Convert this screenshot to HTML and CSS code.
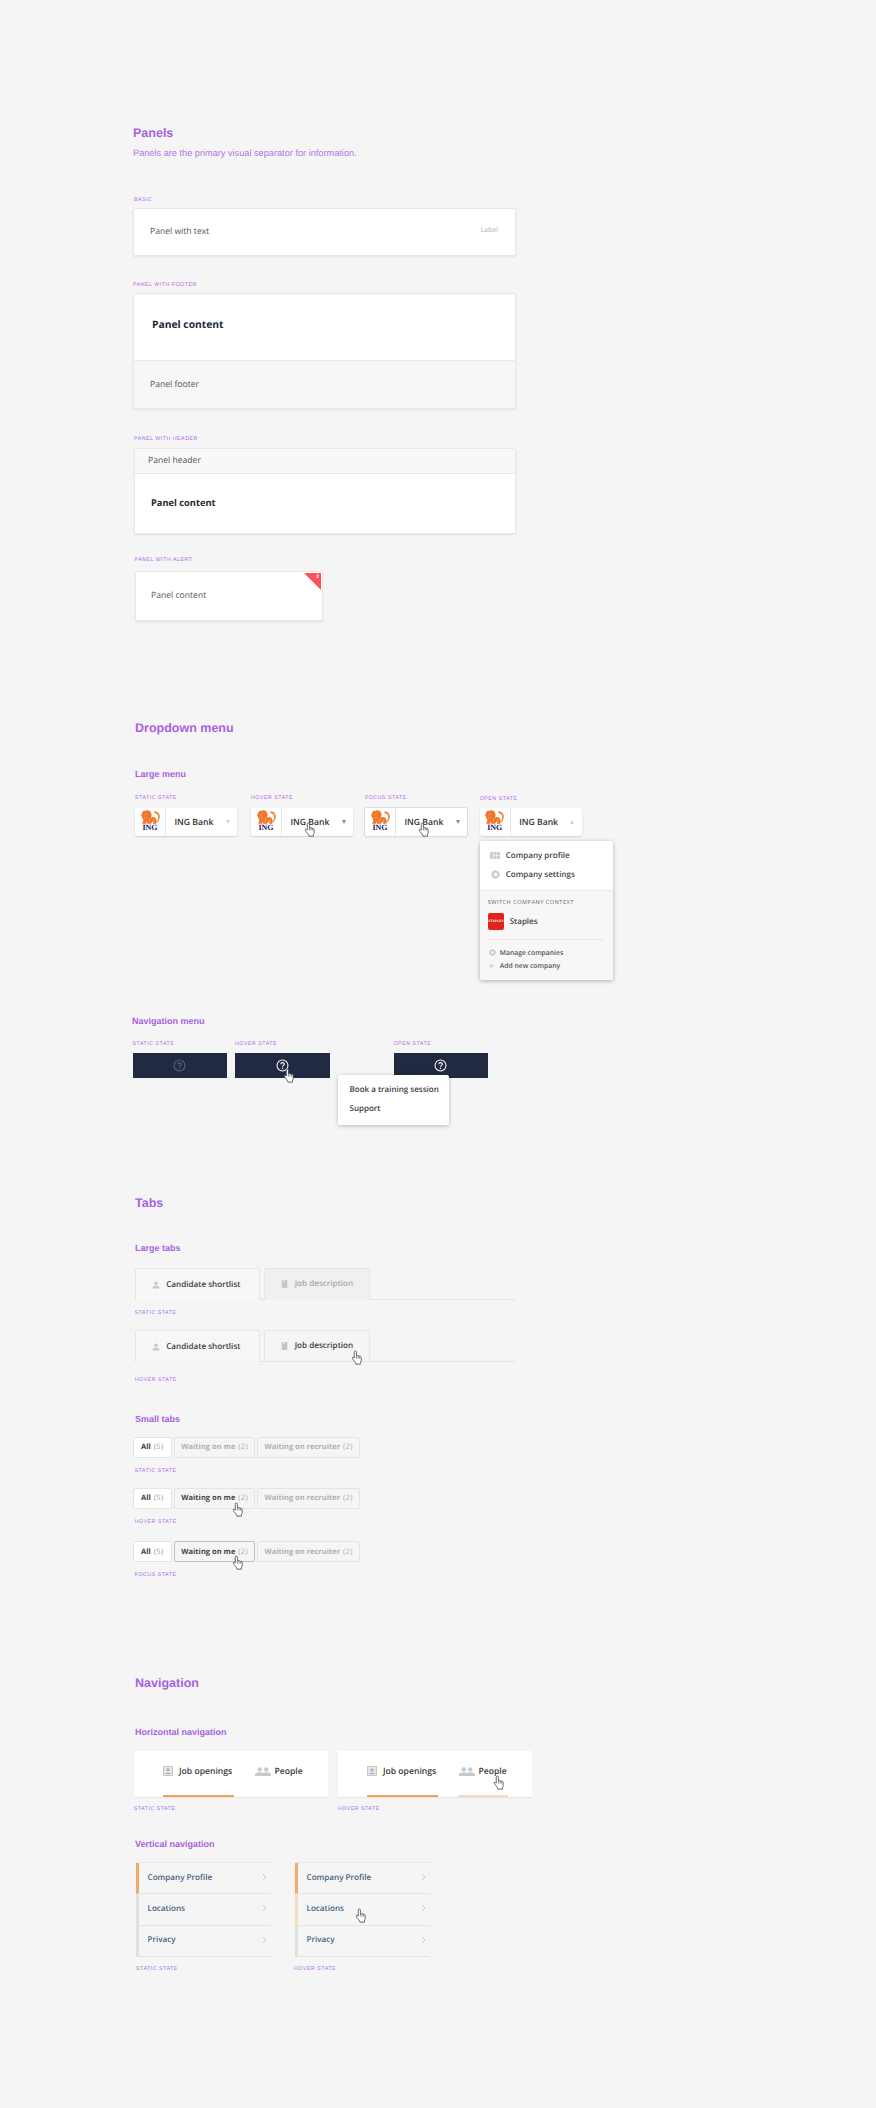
FILE: index.html
```html
<!DOCTYPE html>
<html lang="en">
<head>
    <meta charset="UTF-8">
    <meta name="viewport" content="width=device-width, initial-scale=1.0">
    <title>Panels, menus, tabs and navigation</title>
    <link rel="stylesheet" href="styles.css">
</head>
<body>
    <svg class="sprites" width="0" height="0">
        <symbol id="lion" viewBox="0 0 30 21">
            <path d="M21 2c5.500 0 8.500 4 8 9-.4 4-3 7.500-6.500 9l-1-1.400c2.700-1.500 4.800-4.300 5-7.300.2-3.400-1.800-6-5.500-6.300z" fill="#f58a3c"/>
            <path d="M8 1c3.500-1.300 7 .3 8 3.500 1.200 3 .5 5.500-.5 7 2.500-1.500 5-1.200 6.500 0 1.700 1.400 2 4.500 1.500 9H19l-.5-3.500-3 3.500H9.500l.5-4-2 4H2.500l2-6c-1.500-1-2.500-3-2-4.500-1.500-.5-2-2-1-3 .1-2.500 2-4.500 3-5.500.7-.3 2.200-.5 3.500 0z" fill="#f2762a"/>
            <path d="M6 7.500l3-1M5 11.500c2 .5 3.500 0 4.500-1M14 12l-1 6M20 14l-1 5" stroke="#fbc79c" stroke-width=".8" fill="none"/>
        </symbol>
        <symbol id="hand" viewBox="0 0 14 18">
            <path d="M5 1.200c.8 0 1.300.6 1.300 1.400v4.200c.3-.4 1.700-.4 2 .3.400-.3 1.600-.3 1.900.6.500-.3 1.800-.1 1.800 1.100v3.400c0 1.600-.5 2.400-1 3.400v1.400H5.600v-1.200C4.500 14.600 3.600 13 2.400 11.600 1.600 10.600.9 9.600 1.500 9c.7-.6 1.600 0 2.200.8V2.600C3.700 1.800 4.200 1.200 5 1.200z" fill="#fff" stroke="#3a3a3a" stroke-width=".9" stroke-linejoin="round"/>
            <path d="M6.300 7v3.200M8.300 7.200v3M10.200 8v2.400" stroke="#3a3a3a" stroke-width=".7" fill="none"/>
        </symbol>
        <symbol id="question" viewBox="0 0 14 14">
            <circle cx="7" cy="7" r="5.900" fill="none" stroke="currentColor" stroke-width="1.100"/>
            <path d="M5.200 5.600c0-2.300 3.700-2.300 3.700-.1 0 1.400-1.900 1.400-1.900 2.900" fill="none" stroke="currentColor" stroke-width="1.200"/>
            <circle cx="7" cy="10" r=".8" fill="currentColor"/>
        </symbol>
        <symbol id="person" viewBox="0 0 10 10">
            <circle cx="5" cy="2.800" r="2.100" fill="currentColor"/>
            <path d="M.8 9.500V8c0-1.400 2.400-2.100 4.200-2.100S9.200 6.600 9.200 8v1.500z" fill="currentColor"/>
        </symbol>
        <symbol id="doc" viewBox="0 0 8 10">
            <path d="M.5 0h1.800v2.500l.8-.6.8.6V0H7.500v10H.5z" fill="currentColor"/>
        </symbol>
        <symbol id="inbox" viewBox="0 0 10 10">
            <path d="M.5.500h9v9h-9z" fill="#e6e6e6" stroke="#c6c6c6"/>
            <path d="M5 2v4M3 4h4M2.500 7.500h5" stroke="#a9a9a9" stroke-width="1" fill="none"/>
        </symbol>
        <symbol id="people" viewBox="0 0 16 9">
            <circle cx="4.800" cy="2.400" r="2.200" fill="currentColor"/>
            <circle cx="11.200" cy="2.400" r="2.200" fill="currentColor"/>
            <path d="M0 9V7.500c0-1.500 2.600-2.300 4.800-2.300 1.300 0 2.400.3 3.200.7.800-.4 1.900-.7 3.200-.7 2.200 0 4.800.8 4.800 2.300V9z" fill="currentColor"/>
        </symbol>
        <symbol id="chevron" viewBox="0 0 5 8">
            <path d="M1 1l3 3-3 3" fill="none" stroke="#c9c9c9" stroke-width="1"/>
        </symbol>
        <symbol id="gear" viewBox="0 0 10 10">
            <circle cx="5" cy="5" r="3" fill="none" stroke="#c4c4c4" stroke-width="1.600"/>
            <circle cx="5" cy="5" r="4.300" fill="none" stroke="#c4c4c4" stroke-width="1.200" stroke-dasharray="1.500 1.200"/>
        </symbol>
        <symbol id="grid" viewBox="0 0 10 7">
            <path d="M0 0h3v7H0zM3.500 0h3v3h-3zM7 0h3v3H7zM3.500 3.500h3V7h-3zM7 3.500h3V7H7z" fill="#cfcfcf"/>
        </symbol>
    </svg>

    <main class="page">
        <!-- Panels -->
        <h1 class="title">Panels</h1>
        <p class="intro">Panels are the primary visual separator for information.</p>

        <div class="cap cap-basic">Basic</div>
        <div class="panel panel-basic">
            <span>Panel with text</span>
            <span class="panel-label">Label</span>
        </div>

        <div class="cap cap-footer">Panel with footer</div>
        <div class="panel panel-footer">
            <div class="footer-body"><strong>Panel content</strong></div>
            <div class="footer-foot">Panel footer</div>
        </div>

        <div class="cap cap-header">Panel with header</div>
        <div class="panel panel-header">
            <div class="header-head">Panel header</div>
            <div class="header-body"><strong>Panel content</strong></div>
        </div>

        <div class="cap cap-alert">Panel with alert</div>
        <div class="panel panel-alert">
            <span>Panel content</span>
            <span class="alert-corner"></span>
            <span class="alert-count">2</span>
        </div>

        <!-- Dropdown menu -->
        <h1 class="title title-dropdown">Dropdown menu</h1>
        <h2 class="subtitle sub-large">Large menu</h2>
        <div class="drop-states">
            <div>
                <div class="cap">Static state</div>
                <div class="dropdown">
                    <div class="logo"><svg class="lion"><use href="#lion"/></svg><span>ING</span></div>
                    <span class="drop-name">ING Bank</span>
                    <span class="arrow arrow-light"></span>
                </div>
            </div>
            <div>
                <div class="cap">Hover state</div>
                <div class="dropdown">
                    <div class="logo"><svg class="lion"><use href="#lion"/></svg><span>ING</span></div>
                    <span class="drop-name">ING Bank</span>
                    <span class="arrow"></span>
                    <svg class="hand hand-drop"><use href="#hand"/></svg>
                </div>
            </div>
            <div>
                <div class="cap">Focus state</div>
                <div class="dropdown dropdown-focus">
                    <div class="logo"><svg class="lion"><use href="#lion"/></svg><span>ING</span></div>
                    <span class="drop-name">ING Bank</span>
                    <span class="arrow"></span>
                    <svg class="hand hand-drop"><use href="#hand"/></svg>
                </div>
            </div>
            <div>
                <div class="cap cap-open">Open state</div>
                <div class="dropdown">
                    <div class="logo"><svg class="lion"><use href="#lion"/></svg><span>ING</span></div>
                    <span class="drop-name">ING Bank</span>
                    <span class="arrow arrow-up"></span>
                    <div class="drop-menu">
                        <div class="menu-top">
                            <div class="menu-item"><svg class="icon-grid"><use href="#grid"/></svg>Company profile</div>
                            <div class="menu-item"><svg class="icon-gear"><use href="#gear"/></svg>Company settings</div>
                        </div>
                        <div class="menu-bottom">
                            <div class="menu-cap">Switch company context</div>
                            <div class="menu-company"><span class="staples"><span>STAPLES</span></span>Staples</div>
                            <div class="menu-link menu-link-first"><svg class="icon-small"><use href="#gear"/></svg>Manage companies</div>
                            <div class="menu-link"><span class="plus">+</span>Add new company</div>
                        </div>
                    </div>
                </div>
            </div>
        </div>

        <h2 class="subtitle sub-navmenu">Navigation menu</h2>
        <div class="nav-states">
            <div>
                <div class="cap">Static state</div>
                <div class="nav-bar nav-bar-dim"><svg class="question"><use href="#question"/></svg></div>
            </div>
            <div>
                <div class="cap">Hover state</div>
                <div class="nav-bar">
                    <svg class="question"><use href="#question"/></svg>
                    <svg class="hand hand-nav"><use href="#hand"/></svg>
                </div>
            </div>
            <div>
                <div class="cap">Open state</div>
                <div class="nav-bar">
                    <svg class="question"><use href="#question"/></svg>
                    <div class="nav-pop">
                        <div>Book a training session</div>
                        <div>Support</div>
                    </div>
                </div>
            </div>
        </div>

        <!-- Tabs -->
        <h1 class="title title-tabs">Tabs</h1>
        <h2 class="subtitle sub-largetabs">Large tabs</h2>
        <div class="large-tabs">
            <div class="ltab ltab-active"><svg class="icon-person"><use href="#person"/></svg>Candidate shortlist</div>
            <div class="ltab ltab-off"><svg class="icon-doc"><use href="#doc"/></svg>Job description</div>
        </div>
        <div class="cap cap-tab1">Static state</div>
        <div class="large-tabs large-tabs-2">
            <div class="ltab ltab-active"><svg class="icon-person"><use href="#person"/></svg>Candidate shortlist</div>
            <div class="ltab ltab-hover"><svg class="icon-doc"><use href="#doc"/></svg>Job description<svg class="hand hand-ltab"><use href="#hand"/></svg></div>
        </div>
        <div class="cap cap-tab2">Hover state</div>

        <h2 class="subtitle sub-smalltabs">Small tabs</h2>
        <div class="small-tabs st-1">
            <div class="stab stab-on">All <span>(5)</span></div>
            <div class="stab stab-mid">Waiting on me <span>(2)</span></div>
            <div class="stab stab-wide">Waiting on recruiter <span>(2)</span></div>
        </div>
        <div class="cap cap-st1">Static state</div>
        <div class="small-tabs st-2">
            <div class="stab stab-on">All <span>(5)</span></div>
            <div class="stab stab-mid stab-dark">Waiting on me <span>(2)</span><svg class="hand hand-stab"><use href="#hand"/></svg></div>
            <div class="stab stab-wide">Waiting on recruiter <span>(2)</span></div>
        </div>
        <div class="cap cap-st2">Hover state</div>
        <div class="small-tabs st-3">
            <div class="stab stab-on">All <span>(5)</span></div>
            <div class="stab stab-mid stab-dark stab-focus">Waiting on me <span>(2)</span><svg class="hand hand-stab"><use href="#hand"/></svg></div>
            <div class="stab stab-wide">Waiting on recruiter <span>(2)</span></div>
        </div>
        <div class="cap cap-st3">Focus state</div>

        <!-- Navigation -->
        <h1 class="title title-nav">Navigation</h1>
        <h2 class="subtitle sub-hnav">Horizontal navigation</h2>
        <div class="hnav-row">
            <div>
                <div class="hnav">
                    <div class="hnav-item hnav-jobs hnav-current"><svg class="icon-inbox"><use href="#inbox"/></svg>Job openings</div>
                    <div class="hnav-item hnav-people"><svg class="icon-people"><use href="#people"/></svg>People</div>
                </div>
                <div class="cap cap-hnav">Static state</div>
            </div>
            <div>
                <div class="hnav">
                    <div class="hnav-item hnav-jobs hnav-current"><svg class="icon-inbox"><use href="#inbox"/></svg>Job openings</div>
                    <div class="hnav-item hnav-people hnav-hover"><svg class="icon-people"><use href="#people"/></svg>People<svg class="hand hand-hnav"><use href="#hand"/></svg></div>
                </div>
                <div class="cap cap-hnav">Hover state</div>
            </div>
        </div>

        <h2 class="subtitle sub-vnav">Vertical navigation</h2>
        <div class="vnav-row">
            <div>
                <div class="vnav">
                    <div class="vnav-item vnav-current">Company Profile<svg class="chevron"><use href="#chevron"/></svg></div>
                    <div class="vnav-item">Locations<svg class="chevron"><use href="#chevron"/></svg></div>
                    <div class="vnav-item">Privacy<svg class="chevron"><use href="#chevron"/></svg></div>
                </div>
                <div class="cap cap-vnav">Static state</div>
            </div>
            <div>
                <div class="vnav">
                    <div class="vnav-item vnav-current">Company Profile<svg class="chevron"><use href="#chevron"/></svg></div>
                    <div class="vnav-item vnav-hover">Locations<svg class="chevron"><use href="#chevron"/></svg><svg class="hand hand-vnav"><use href="#hand"/></svg></div>
                    <div class="vnav-item">Privacy<svg class="chevron"><use href="#chevron"/></svg></div>
                </div>
                <div class="cap cap-vnav cap-vnav-2">Hover state</div>
            </div>
        </div>
    </main>
</body>
</html>
```

FILE: styles.css
```css
* {
    box-sizing: border-box;
}
body {
    margin: 0;
    background-color: #f5f5f5;
    font-family: "Open Sans", "Noto Sans", sans-serif;
    color: #555;
    text-rendering: geometricPrecision;
}
.sprites {
    position: absolute;
}
.page {
    width: 876px;
    height: 2108px;
    padding: 125px 0 0 133px;
    overflow: hidden;
    white-space: nowrap;
}

/* headings */
.title {
    margin: 0;
    font: bold 12.5px/16px "Liberation Sans", Arial, sans-serif;
    color: #a862e0;
}
.title-dropdown {
    margin: 99px 0 0 2px;
}
.title-tabs {
    margin: 117px 0 0 2px;
}
.title-nav {
    margin: 97.3px 0 0 2px;
}
.subtitle {
    margin: 0 0 0 2px;
    font: bold 9px/12px "Liberation Sans", Arial, sans-serif;
    color: #a862e0;
}
.sub-large {
    margin-top: 32px;
}
.sub-navmenu {
    margin: 179px 0 0 -1px;
}
.sub-largetabs {
    margin-top: 31.5px;
}
.sub-smalltabs {
    margin-top: 30px;
}
.sub-hnav {
    margin-top: 35px;
}
.sub-vnav {
    margin-top: 26.6px;
}
.intro {
    margin: 4.700px 0 0;
    font: 9.200px/14px "Liberation Sans", Arial, sans-serif;
    color: #b174e6;
}
.cap {
    padding-top: 1px;
    margin-bottom: -1px;
    font: 5.300px/8px "Liberation Sans", Arial, sans-serif;
    letter-spacing: .5px;
    text-transform: uppercase;
    color: #ad6ce6;
}

/* panels */
.panel {
    background-color: #fff;
    border: 1px solid #e8e8e8;
    border-radius: 2px;
    box-shadow: 0 1px 2px rgba(0, 0, 0, .08);
    font-size: 8.600px;
    overflow: hidden;
}
.panel strong {
    font-weight: 700;
    color: #22273c;
}
.cap-basic {
    margin: 35.3px 0 -1px 1px;
}
.panel-basic {
    display: flex;
    justify-content: space-between;
    align-items: center;
    width: 383px;
    height: 48px;
    margin-top: 5px;
    padding: 0 17px 2px 16px;
}
.panel-label {
    font-size: 7px;
    color: #b5b5b5;
}
.cap-footer {
    margin-top: 24px;
}
.panel-footer {
    width: 383px;
    height: 116px;
    margin-top: 5px;
}
.footer-body {
    display: flex;
    align-items: center;
    height: 67px;
    padding: 0 0 4px 18px;
    border-bottom: 1px solid #e8e8e8;
    font-size: 10.300px;
}
.footer-foot {
    display: flex;
    align-items: center;
    height: 47px;
    padding: 0 0 1px 16px;
    background-color: #f7f7f7;
}
.cap-header {
    margin: 25px 0 -1px 1px;
}
.panel-header {
    width: 382px;
    height: 86.5px;
    margin: 6px 0 0 1px;
}
.header-head {
    display: flex;
    align-items: center;
    height: 25px;
    padding: 0 0 2px 13px;
    background-color: #f8f8f8;
    border-bottom: 1px solid #e8e8e8;
}
.header-body {
    display: flex;
    align-items: center;
    height: 60px;
    padding: 0 0 3px 16px;
    font-size: 9.300px;
}
.panel-header strong {
    color: #2a2a2a;
}
.cap-alert {
    margin: 20.5px 0 -1px 1.500px;
}
.panel-alert {
    position: relative;
    display: flex;
    align-items: center;
    width: 188px;
    height: 50px;
    margin: 8px 0 0 2px;
    padding: 0 0 1px 15px;
}
.alert-corner {
    position: absolute;
    top: 1px;
    right: 1px;
    border-top: 17px solid #f9525a;
    border-left: 17px solid transparent;
}
.alert-count {
    position: absolute;
    top: 1px;
    right: 3px;
    font: bold 5px/8px "Liberation Sans", Arial, sans-serif;
    color: #fff;
}

/* dropdown menu */
.drop-states {
    display: grid;
    grid-template-columns: 116px 114px 114.7px 102px;
    margin: 13px 0 0 2px;
}
.dropdown {
    position: relative;
    display: flex;
    align-items: center;
    width: 102px;
    height: 27.5px;
    margin-top: 7.500px;
    background-color: #fff;
    border-radius: 2px;
    box-shadow: 0 1px 2px rgba(0, 0, 0, .15);
}
.dropdown-focus {
    box-shadow: 0 0 0 1px #ddd, 0 1px 2px rgba(0, 0, 0, .15);
}
.cap-open {
    padding-top: 2px;
    margin-bottom: -2px;
}
.logo {
    display: flex;
    flex-direction: column;
    align-items: center;
    flex: none;
    width: 31px;
    height: 100%;
    padding-top: 2px;
    border-right: 1px solid #e8e8e8;
    font: bold 8px/8px "Liberation Serif", serif;
    color: #1b2066;
}
.lion {
    width: 21px;
    height: 14px;
}
.drop-name {
    margin-left: 8.500px;
    font-size: 8.600px;
    font-weight: 600;
    color: #2e2e2e;
}
.arrow {
    position: absolute;
    top: 12px;
    right: 7.500px;
    border-top: 4px solid #888;
    border-left: 2.500px solid transparent;
    border-right: 2.500px solid transparent;
}
.arrow-light {
    border-top-color: #d2d2d2;
}
.arrow-up {
    border-top: 0;
    border-bottom: 4px solid #d2d2d2;
}
.drop-menu {
    position: absolute;
    top: 32.500px;
    left: 0;
    width: 133.500px;
    height: 139.300px;
    background-color: #f7f7f7;
    border-radius: 2px;
    box-shadow: 0 1px 4px rgba(0, 0, 0, .3);
    overflow: hidden;
}
.menu-top {
    height: 50px;
    padding-top: 4.500px;
    background-color: #fff;
    border-bottom: 1px solid #ececec;
}
.menu-item {
    display: flex;
    align-items: center;
    height: 19.500px;
    font-size: 8px;
    font-weight: 600;
    color: #444;
}
.icon-grid {
    width: 10px;
    height: 7px;
    margin: 0 5.500px 0 10.500px;
}
.icon-gear {
    width: 9px;
    height: 9px;
    margin: 0 6px 0 11px;
}
.menu-bottom {
    padding: 7px 9px 0 8px;
}
.menu-cap {
    font-size: 5.600px;
    line-height: 8px;
    letter-spacing: .5px;
    text-transform: uppercase;
    color: #666;
}
.menu-company {
    display: flex;
    align-items: center;
    height: 17px;
    margin-top: 7px;
    font-size: 8px;
    font-weight: 600;
    color: #444;
}
.staples {
    display: flex;
    align-items: center;
    justify-content: center;
    width: 16.500px;
    height: 17px;
    margin-right: 5.500px;
    background-color: #e2231a;
    border-radius: 2px;
    font: bold 3.500px/4px "Liberation Serif", serif;
    color: #fff;
}
.menu-link {
    display: flex;
    align-items: center;
    height: 13px;
    font-size: 6.800px;
    font-weight: 600;
    color: #555;
}
.menu-link-first {
    margin-top: 9px;
    padding-top: 7px;
    height: 20px;
    background-image: linear-gradient(90deg, #d5d5d5 50%, transparent 50%);
    background-size: 2px 1px;
    background-repeat: repeat-x;
    background-position: top;
}
.icon-small {
    width: 7px;
    height: 7px;
    margin: 0 4px 0 1px;
}
.plus {
    width: 7px;
    margin: 0 4px 0 1px;
    font-size: 9px;
    font-weight: 400;
    color: #bbb;
}

/* navigation menu */
.nav-states {
    display: grid;
    grid-template-columns: 102.500px 158.500px 94.500px;
    margin: 12.500px 0 0 -.5px;
}
.nav-bar {
    position: relative;
    display: flex;
    align-items: center;
    justify-content: center;
    width: 94.500px;
    height: 25px;
    margin-top: 5.500px;
    background-color: #222a42;
    color: #fff;
}
.nav-bar-dim {
    color: #5f6577;
}
.question {
    width: 13px;
    height: 13px;
}
.nav-pop {
    position: absolute;
    top: 22.500px;
    left: -55.500px;
    width: 110.500px;
    height: 49.500px;
    padding: 5px 0 0 11.500px;
    background-color: #fff;
    border-radius: 2px;
    box-shadow: 0 1px 4px rgba(0, 0, 0, .25);
    font-size: 8px;
    font-weight: 600;
    line-height: 19px;
    color: #3a3a3a;
}

/* large tabs */
.large-tabs {
    display: flex;
    gap: 4px;
    width: 381.500px;
    height: 31.500px;
    margin: 14px 0 0 1.700px;
    border-bottom: 1px solid #e4e4e4;
}
.large-tabs-2 {
    margin-top: 14.300px;
}
.ltab {
    position: relative;
    display: flex;
    align-items: center;
    height: 31.500px;
    border: 1px solid #e6e6e6;
    border-bottom: 0;
    border-radius: 2px 2px 0 0;
    font-size: 8.100px;
    font-weight: 600;
    color: #3c3c3c;
}
.ltab-active {
    width: 125px;
    padding-left: 16px;
    background-color: #f7f7f7;
}
.ltab-off,
.ltab-hover {
    width: 106.500px;
    padding: 0 0 2px 16px;
}
.ltab-off {
    background-color: #f0f0f0;
    color: #a8a8a8;
}
.icon-person {
    width: 8px;
    height: 8px;
    margin-right: 6.500px;
    color: #c6c6c6;
}
.icon-doc {
    width: 7px;
    height: 8px;
    margin-right: 7px;
    color: #c6c6c6;
}
.cap-tab1 {
    margin: 8px 0 -1px 1.700px;
}
.cap-tab2 {
    margin: 13.500px 0 -1px 1.700px;
}

/* small tabs */
.small-tabs {
    display: flex;
    gap: 2.400px;
    margin-left: -.5px;
}
.st-1 {
    margin-top: 11.700px;
}
.st-2 {
    margin-top: 13.500px;
}
.st-3 {
    margin-top: 16px;
}
.stab {
    position: relative;
    display: flex;
    align-items: center;
    justify-content: center;
    gap: 3px;
    height: 20.700px;
    border: 1px solid #e4e4e4;
    border-radius: 2px;
    font-size: 7.500px;
    font-weight: 700;
    color: #b0b0b0;
}
.stab span {
    font-weight: 400;
    letter-spacing: .3px;
}
.stab-on {
    width: 39.500px;
    background-color: #fff;
    color: #3c3c3c;
}
.stab-on span {
    color: #999;
}
.stab-mid {
    width: 80.500px;
}
.stab-wide {
    width: 102.500px;
}
.stab-dark {
    color: #444;
}
.stab-dark span {
    color: #aaa;
}
.stab-focus {
    border-color: #bdbdbd;
}
.cap-st1,
.cap-st2 {
    margin: 8.700px 0 -1px 1.700px;
}
.cap-st3 {
    margin: 8px 0 -1px 1.700px;
}

/* horizontal navigation */
.hnav-row {
    display: flex;
    gap: 9.700px;
    margin: 12.400px 0 0 .7px;
}
.hnav {
    display: flex;
    gap: 19.700px;
    width: 194.300px;
    height: 46.600px;
    padding-left: 29.300px;
    background-color: #fff;
    box-shadow: 0 1px 1px rgba(0, 0, 0, .06);
}
.hnav-item {
    position: relative;
    display: flex;
    align-items: center;
    height: 100%;
    padding-bottom: 3px;
    border-bottom: 2px solid transparent;
    font-size: 8.600px;
    font-weight: 600;
    color: #3a3a3a;
}
.hnav-jobs {
    width: 71.300px;
}
.hnav-people {
    width: 50px;
    padding-left: 1px;
}
.hnav-current {
    border-bottom-color: #f2a35e;
}
.hnav-hover {
    border-bottom-color: #f9dcc0;
}
.icon-inbox {
    flex: none;
    width: 10px;
    height: 10px;
    margin-right: 6px;
}
.icon-people {
    flex: none;
    width: 16px;
    height: 9px;
    margin-right: 3.500px;
    color: #c9c9c9;
}
.cap-hnav {
    margin-top: 6.400px;
}

/* vertical navigation */
.vnav-row {
    display: flex;
    gap: 24px;
    margin: 12px 0 0 3px;
}
.vnav {
    width: 135px;
    border-top: 1px solid #e8e8e8;
}
.vnav-item {
    position: relative;
    display: flex;
    align-items: center;
    justify-content: space-between;
    height: 31.200px;
    padding: 0 4.500px 2px 8.500px;
    border-left: 3px solid #e0e0e0;
    border-bottom: 1px solid #e4e4e4;
    font-size: 8.100px;
    font-weight: 600;
    color: #47627f;
}
.vnav-current {
    border-left-color: #f2a96a;
}
.vnav-hover {
    border-left-color: #f9dcc0;
}
.chevron {
    width: 5px;
    height: 8px;
}
.cap-vnav {
    margin-top: 7.200px;
}
.cap-vnav-2 {
    margin-left: -1px;
}

/* cursors, they sit on top of the state they show */
.hand {
    position: absolute;
    width: 12px;
    height: 15px;
}
.hand-drop {
    top: 13.500px;
    left: 53px;
}
.hand-nav {
    top: 15px;
    left: 48px;
}
.hand-ltab {
    top: 19px;
    left: 86px;
}
.hand-stab {
    top: 13px;
    left: 57px;
}
.hand-hnav {
    top: 24px;
    left: 35px;
}
.hand-vnav {
    top: 14px;
    left: 57px;
}
```
